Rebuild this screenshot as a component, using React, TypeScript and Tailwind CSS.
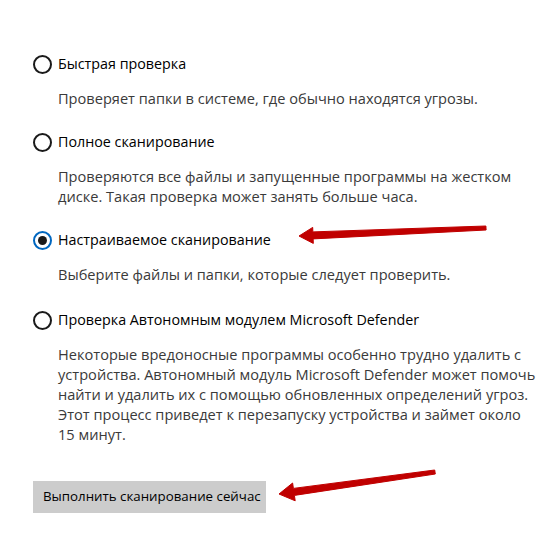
import { useState } from "react";

// варианты сканирования
interface scanOption {
  id: string;
  title: string;
  lines: string[]; // строки описания, как в окне
  gap: string; // отступ снизу
}

const options: scanOption[] = [
  {
    id: "quick",
    title: "Быстрая проверка",
    lines: ["Проверяет папки в системе, где обычно находятся угрозы."],
    gap: "mb-[24px]",
  },
  {
    id: "full",
    title: "Полное сканирование",
    lines: [
      "Проверяются все файлы и запущенные программы на жестком",
      "диске. Такая проверка может занять больше часа.",
    ],
    gap: "mb-[24px]",
  },
  {
    id: "custom",
    title: "Настраиваемое сканирование",
    lines: ["Выберите файлы и папки, которые следует проверить."],
    gap: "mb-[26px]",
  },
  {
    id: "offline",
    title: "Проверка Автономным модулем Microsoft Defender",
    lines: [
      "Некоторые вредоносные программы особенно трудно удалить с",
      "устройства. Автономный модуль Microsoft Defender может помочь",
      "найти и удалить их с помощью обновленных определений угроз.",
      "Этот процесс приведет к перезапуску устройства и займет около",
      "15 минут.",
    ],
    gap: "mb-[37px]",
  },
];

function Radio({ checked }: { checked: boolean }) {
  if (checked) {
    return (
      <span className="w-[19px] h-[19px] rounded-full border-2 border-[#0067c0] flex items-center justify-center shrink-0">
        <span className="w-[9px] h-[9px] rounded-full bg-[#1a1a1a]" />
      </span>
    );
  }
  return <span className="w-[19px] h-[19px] rounded-full border-2 border-[#1a1a1a] shrink-0" />;
}

export default function App() {
  const [selected, setSelected] = useState("custom");

  return (
    <main
      className="relative w-[539px] h-[544px] bg-white overflow-hidden"
      style={{ fontFamily: '"Open Sans", "Noto Sans", sans-serif' }}
    >
      <div className="flex flex-col pl-[33px] pt-[54px]">
        {options.map((opt) => (
          <div key={opt.id} className={`flex flex-col ${opt.gap}`}>
            <div
              className="flex items-center gap-[6px] h-[20px] cursor-pointer"
              onClick={() => setSelected(opt.id)}
            >
              <Radio checked={selected === opt.id} />
              <span className="text-[14.3px] leading-[20px] text-black whitespace-nowrap">{opt.title}</span>
            </div>
            <div className="ml-[25px] mt-[14px] text-[14.6px] leading-[20px] text-[#3a3a3a]">
              {opt.lines.map((l, i) => (
                <div key={i} className="whitespace-nowrap">
                  {l}
                </div>
              ))}
            </div>
          </div>
        ))}
        <button className="self-start h-[32px] w-[233px] bg-[#cccccc] text-left pl-[10px] text-[13.3px] text-black whitespace-nowrap">
          Выполнить сканирование сейчас
        </button>
      </div>

      {/* стрелки */}
      <svg className="absolute inset-0 pointer-events-none" width="539" height="544" viewBox="0 0 539 544">
        <polygon
          fill="#c00000"
          stroke="#c00000"
          strokeWidth="1"
          strokeLinejoin="round"
          points="299,236 312.7,227.4 312.85,231.9 485.9,226 486.1,230 313.15,238.9 313.3,243.4"
        />
        <polygon
          fill="#c00000"
          stroke="#c00000"
          strokeWidth="1"
          strokeLinejoin="round"
          points="279,494 292.6,483 293.4,488.4 434.7,470 435.3,474 294.4,495.4 295.2,500.8"
        />
      </svg>
    </main>
  );
}
